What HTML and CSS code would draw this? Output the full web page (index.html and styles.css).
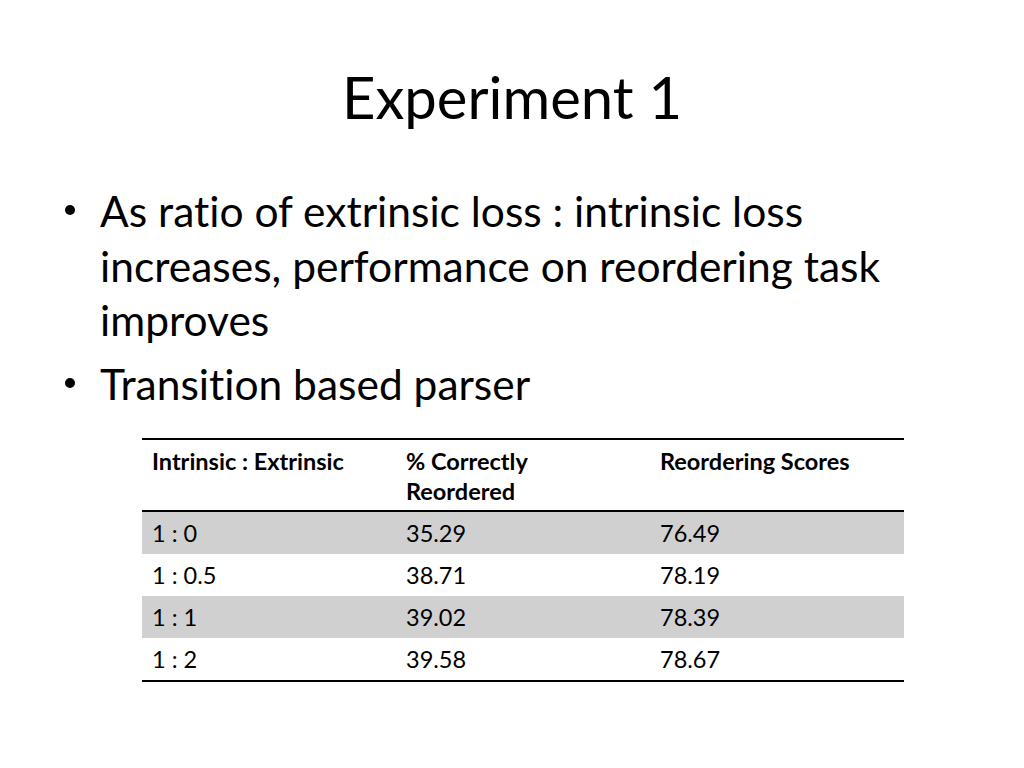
FILE: index.html
```html
<!DOCTYPE html>
<html>
<head>
<meta charset="utf-8">
<link rel="stylesheet" href="styles.css">
</head>
<body>
<div class="slide">
  <h1 class="title">Experiment 1</h1>
  <ul class="bullets">
    <li>As ratio of extrinsic loss : intrinsic loss increases, performance on reordering task improves</li>
    <li>Transition based parser</li>
  </ul>
  <table class="results">
    <thead>
      <tr><th>Intrinsic : Extrinsic</th><th>% Correctly<br>Reordered</th><th>Reordering Scores</th></tr>
    </thead>
    <tbody>
      <tr class="shade"><td>1 : 0</td><td>35.29</td><td>76.49</td></tr>
      <tr><td>1 : 0.5</td><td>38.71</td><td>78.19</td></tr>
      <tr class="shade"><td>1 : 1</td><td>39.02</td><td>78.39</td></tr>
      <tr><td>1 : 2</td><td>39.58</td><td>78.67</td></tr>
    </tbody>
  </table>
</div>
</body>
</html>
```
FILE: styles.css
```css
html, body {
  margin: 0;
  padding: 0;
  background: #ffffff;
}
.slide {
  width: 1024px;
  height: 768px;
  box-sizing: border-box;
  padding-top: 63px;
  font-family: "Lato", "Open Sans", sans-serif;
  font-variant-ligatures: none;
  color: #000;
}
.title {
  margin: 0;
  text-align: center;
  font-weight: 400;
  font-size: 58px;
  line-height: 68px;
}
.bullets {
  margin: 53px 0 0 0;
  padding: 0 100px 0 100px;
  list-style: none;
  font-size: 42.5px;
  line-height: 54.6px;
}
.bullets li {
  position: relative;
  margin-bottom: 9px;
}
.bullets li::before {
  content: "";
  position: absolute;
  left: -35px;
  top: 21px;
  width: 10px;
  height: 10px;
  border-radius: 50%;
  background: #000;
}
.results {
  margin: 27px 0 0 142px;
  width: 762px;
  border-collapse: collapse;
  font-size: 23.5px;
  line-height: 30px;
  table-layout: fixed;
}
.results th, .results td {
  text-align: left;
  padding: 6px 10px;
  vertical-align: top;
}
.results thead tr {
  border-top: 2px solid #000;
  border-bottom: 2px solid #000;
}
.results th {
  font-weight: 700;
  padding-bottom: 4px;
}
.results td {
  height: 42px;
  box-sizing: border-box;
}
.results tbody tr:last-child {
  border-bottom: 2px solid #000;
}
.results tbody tr:last-child td {
  height: 41px;
}
.results tr.shade td {
  background: #d0d0d0;
}
```
